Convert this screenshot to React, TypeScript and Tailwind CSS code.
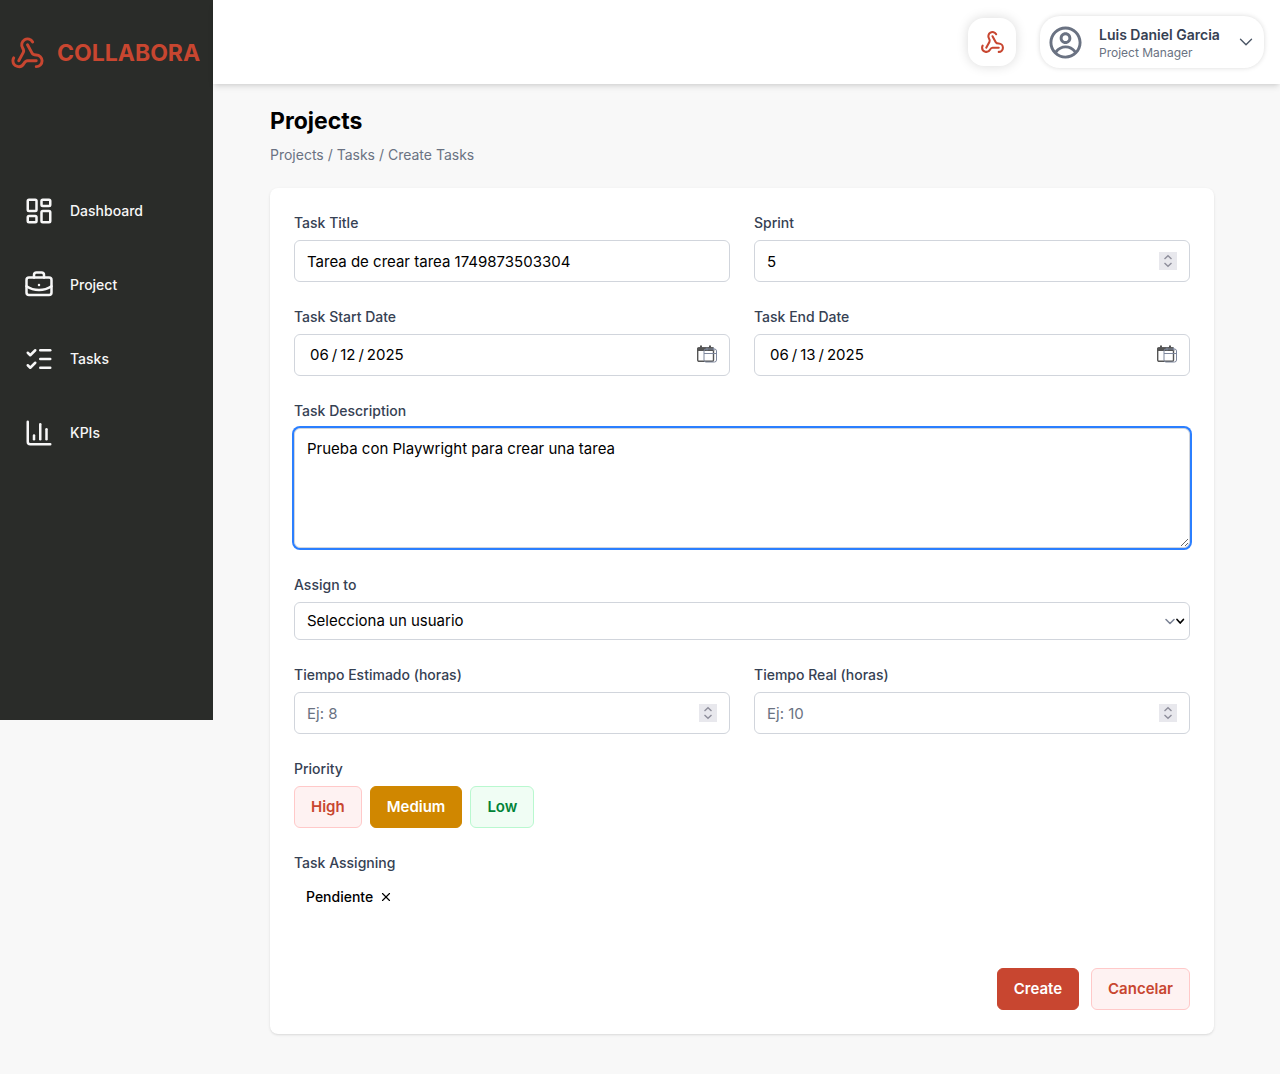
import { useState } from "react";
import type { ReactNode } from "react";
import {
  BriefcaseBusiness,
  ChartColumn,
  ChevronDown,
  LayoutDashboard,
  ListChecks,
  Webhook,
  X,
} from "lucide-react";
import { CgProfile } from "react-icons/cg";

const navItems = [
  { label: "Dashboard", Icon: LayoutDashboard },
  { label: "Project", Icon: BriefcaseBusiness },
  { label: "Tasks", Icon: ListChecks },
  { label: "KPIs", Icon: ChartColumn },
];

const field =
  "block h-[42px] w-full rounded-md border border-gray-300 bg-white px-3 text-[15px] text-black placeholder:text-gray-500";

const caption = "mb-[6px] block text-sm leading-[22px] font-medium text-gray-700";

function Sidebar() {
  return (
    <aside className="h-[720px] w-[213px] shrink-0 bg-[#2a2c29]">
      <a href="#" className="flex h-[106px] items-center gap-3 pl-[10px] text-[#c84630]">
        <Webhook size={35} />
        <span className="text-[23px] font-bold">COLLABORA</span>
      </a>
      <nav className="mt-[67px] flex flex-col">
        {navItems.map(({ label, Icon }) => (
          <a
            key={label}
            href="#"
            className="flex h-[74px] items-center gap-4 pt-px pl-6 text-sm font-medium text-[#f7f7f7]"
          >
            <Icon size={30} />
            {label}
          </a>
        ))}
      </nav>
    </aside>
  );
}

function Header() {
  return (
    <header className="flex h-[84px] items-center justify-end gap-6 bg-white pr-4 shadow-md">
      <button
        type="button"
        aria-label="Collabora"
        className="flex size-12 items-center justify-center rounded-2xl bg-white text-[#c84630] shadow-[0_0_12px_rgba(0,0,0,0.15)]"
      >
        <Webhook size={25} />
      </button>
      <button
        type="button"
        className="flex h-[52px] w-56 items-center rounded-[20px] bg-white pr-[7px] pl-2 text-left shadow-[0_0_5px_rgba(0,0,0,0.15)]"
      >
        <CgProfile size={35} className="shrink-0 text-gray-500" />
        <span className="ml-4 flex flex-1 flex-col pt-[3px]">
          <span className="text-sm leading-[18px] font-semibold text-gray-700">
            Luis Daniel Garcia
          </span>
          <span className="text-xs leading-[18px] text-gray-500">Project Manager</span>
        </span>
        <ChevronDown size={22} strokeWidth={1.5} className="shrink-0 text-gray-600" />
      </button>
    </header>
  );
}

function Field({ id, label, children }: { id: string; label: string; children: ReactNode }) {
  return (
    <div>
      <label htmlFor={id} className={caption}>
        {label}
      </label>
      {children}
    </div>
  );
}

function NumberField({
  id,
  label,
  value,
  placeholder,
}: {
  id: string;
  label: string;
  value?: string;
  placeholder?: string;
}) {
  return (
    <Field id={id} label={label}>
      <div className="relative">
        <input
          id={id}
          type="number"
          defaultValue={value}
          placeholder={placeholder}
          className={`${field} [appearance:textfield]`}
        />
        <svg
          className="pointer-events-none absolute top-3 right-[13px] size-[18px]"
          viewBox="0 0 18 18"
          fill="none"
          stroke="#8e8e9b"
          strokeWidth="1.4"
        >
          <rect width="18" height="18" fill="#e8e8ed" stroke="none" />
          <path d="M5.5 7 9 3.8 12.5 7M5.5 11 9 14.2 12.5 11" />
        </svg>
      </div>
    </Field>
  );
}

function DateField({ id, label, value }: { id: string; label: string; value: string }) {
  return (
    <Field id={id} label={label}>
      <div className="relative">
        <input
          id={id}
          type="date"
          defaultValue={value}
          className={`${field} [&::-webkit-calendar-picker-indicator]:opacity-0 [&::-webkit-datetime-edit-day-field]:px-[3px] [&::-webkit-datetime-edit-month-field]:px-[3px] [&::-webkit-datetime-edit-year-field]:px-[3px]`}
        />
        <svg
          className="pointer-events-none absolute top-[11px] right-3 h-[18px] w-[21px]"
          viewBox="0 0 21 18"
          fill="none"
        >
          <rect x="0.7" y="2.9" width="15.8" height="13.4" rx="1.4" stroke="#555" strokeWidth="1.4" />
          <path d="M1.5 2.2h14.2a1.5 1.5 0 0 1 1.5 1.5V6H0V3.7a1.5 1.5 0 0 1 1.5-1.5z" fill="#555" />
          <path d="M4 0.5v3M13 0.5v3" stroke="#555" strokeWidth="2" />
          <g stroke="#7f889d">
            <rect x="7" y="4" width="12.5" height="13" rx="2" />
            <path d="M7 8.5h12.5M10 2.5v3M16.5 2.5v3" />
          </g>
        </svg>
      </div>
    </Field>
  );
}

const priorities = [
  {
    name: "High",
    idle: "border-red-200 bg-red-50 text-[#c84630]",
    active: "border-[#c84630] bg-[#c84630] text-white",
  },
  {
    name: "Medium",
    idle: "border-yellow-200 bg-yellow-50 text-yellow-600",
    active: "border-[#d08700] bg-[#d08700] text-white",
  },
  {
    name: "Low",
    idle: "border-green-200 bg-green-50 text-green-700",
    active: "border-green-700 bg-green-700 text-white",
  },
];

const button = "h-[42px] rounded-md border px-4 text-[15px] font-semibold";

function TaskForm() {
  const [priority, setPriority] = useState("Medium");
  const [tag, setTag] = useState(true);
  return (
    <form
      className="mt-[23px] flex flex-col gap-6 rounded-lg bg-white p-6 shadow-sm"
      onSubmit={(e) => e.preventDefault()}
    >
      <div className="grid grid-cols-2 gap-6">
        <Field id="title" label="Task Title">
          <input
            id="title"
            type="text"
            defaultValue="Tarea de crear tarea 1749873503304"
            className={field}
          />
        </Field>
        <NumberField id="sprint" label="Sprint" value="5" />
        <DateField id="start" label="Task Start Date" value="2025-06-12" />
        <DateField id="end" label="Task End Date" value="2025-06-13" />
      </div>
      <Field id="description" label="Task Description">
        <textarea
          id="description"
          defaultValue="Prueba con Playwright para crear una tarea"
          className="mb-0.5 block h-[120px] w-full rounded-md border border-gray-300 bg-white px-3 py-2 text-[15px] leading-6 text-black ring-2 ring-[#2b7fff] outline-none"
        />
      </Field>
      <Field id="assign" label="Assign to">
        <div className="relative">
          <select
            id="assign"
            className="block h-[38px] w-full appearance-none rounded-md border border-gray-300 bg-white px-3 text-[15px] text-black"
          >
            <option>Selecciona un usuario</option>
          </select>
          <svg
            className="pointer-events-none absolute top-4 right-[5px] h-2 w-5"
            viewBox="0 0 20 8"
            fill="none"
            strokeLinecap="round"
            strokeLinejoin="round"
            strokeWidth="1.5"
          >
            <path d="M1 1.5 5 5.5 9 1.5" stroke="#7a8294" />
            <path d="M12 1.5 15.2 5 18.4 1.5" stroke="#000" strokeWidth="1.7" />
          </svg>
        </div>
      </Field>
      <div className="grid grid-cols-2 gap-6">
        <NumberField id="estimated" label="Tiempo Estimado (horas)" placeholder="Ej: 8" />
        <NumberField id="real" label="Tiempo Real (horas)" placeholder="Ej: 10" />
      </div>
      <div>
        <p className={caption}>Priority</p>
        <div className="flex gap-2">
          {priorities.map((p) => (
            <button
              key={p.name}
              type="button"
              aria-pressed={priority === p.name}
              onClick={() => setPriority(p.name)}
              className={`${button} ${priority === p.name ? p.active : p.idle}`}
            >
              {p.name}
            </button>
          ))}
        </div>
      </div>
      <div>
        <p className={caption}>Task Assigning</p>
        <div className="flex h-[34px] items-center">
          {tag && (
            <span className="flex items-center gap-[6px] px-3 text-sm font-medium text-black">
              Pendiente
              <button type="button" aria-label="Remove Pendiente" onClick={() => setTag(false)}>
                <X size={14} />
              </button>
            </span>
          )}
        </div>
      </div>
      <div className="mt-[30px] flex justify-end gap-3">
        <button type="submit" className={`${button} border-[#c84630] bg-[#c84630] text-white`}>
          Create
        </button>
        <button type="button" className={`${button} border-red-200 bg-red-50 text-[#c84630]`}>
          Cancelar
        </button>
      </div>
    </form>
  );
}

export default function App() {
  return (
    <div className="flex min-h-screen items-start bg-[#f8f8f8] font-[Inter,sans-serif]">
      <Sidebar />
      <div className="min-w-0 flex-1">
        <Header />
        <main className="pt-[21px] pr-[66px] pb-10 pl-[57px]">
          <h1 className="text-[23px] leading-8 font-bold text-black">Projects</h1>
          <p className="mt-2 text-sm text-gray-500">Projects / Tasks / Create Tasks</p>
          <TaskForm />
        </main>
      </div>
    </div>
  );
}
